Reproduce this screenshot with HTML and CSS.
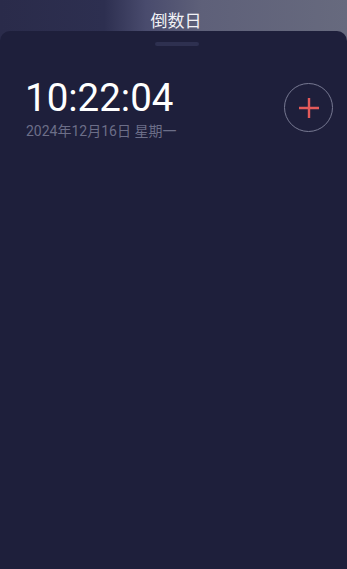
FILE: index.html
```html
<!DOCTYPE html>
<html lang="zh">
<head>
<meta charset="utf-8">
<link rel="stylesheet" href="styles.css">
</head>
<body>
<div class="app">
  <header class="topbar">
    <div class="title">倒数日</div>
  </header>
  <main class="sheet">
    <div class="handle"></div>
    <div class="clock-row">
      <div class="clock">
        <div class="time">10:22:04</div>
        <div class="date">2024年12月16日 星期一</div>
      </div>
      <button class="add" aria-label="添加">
        <svg width="20" height="20" viewBox="0 0 20 20"><path d="M10 0v20M0 10h20" stroke="#e35a5a" stroke-width="2.4" fill="none"/></svg>
      </button>
    </div>
  </main>
</div>
</body>
</html>
```
FILE: styles.css
```css
* { box-sizing: border-box; }
html, body { margin: 0; padding: 0; }
body {
  width: 347px;
  height: 569px;
  overflow: hidden;
  font-family: Roboto, "Noto Sans CJK SC", sans-serif;
  background: #1e1f3b;
}
.app {
  display: flex;
  flex-direction: column;
  height: 569px;
  background: linear-gradient(90deg, #2a2b4a 0%, #2d2f50 30%, #494b6d 42%, #5e6079 58%, #676a7e 100%);
}
.topbar {
  height: 41px;
  margin-bottom: -10px;
  display: flex;
  justify-content: center;
  padding-top: 9px;
  padding-left: 5px;
}
.title {
  color: #f2f2f6;
  font-family: "Noto Sans CJK SC", sans-serif;
  font-size: 17px;
  line-height: 22px;
}
.sheet {
  flex: 1;
  background: #1e1f3b;
  border-radius: 10px 10px 0 0;
  display: flex;
  flex-direction: column;
  align-items: center;
}
.handle {
  width: 44px;
  height: 4px;
  border-radius: 2px;
  background: #2e3050;
  margin-top: 11px;
  margin-left: 6px;
}
.clock-row {
  width: 100%;
  display: flex;
  justify-content: space-between;
  align-items: flex-start;
  padding: 31px 14px 0 25px;
}
.time {
  color: #ffffff;
  font-size: 38.5px;
  line-height: 42px;
}
.date {
  color: #6c6e88;
  font-size: 14px;
  line-height: 18px;
  margin-top: 3px;
  padding-left: 1px;
}
.add {
  width: 49px;
  height: 49px;
  border-radius: 50%;
  border: 1.5px solid #777992;
  background: transparent;
  display: flex;
  align-items: center;
  justify-content: center;
  padding: 0;
  margin-top: 6px;
}
```
